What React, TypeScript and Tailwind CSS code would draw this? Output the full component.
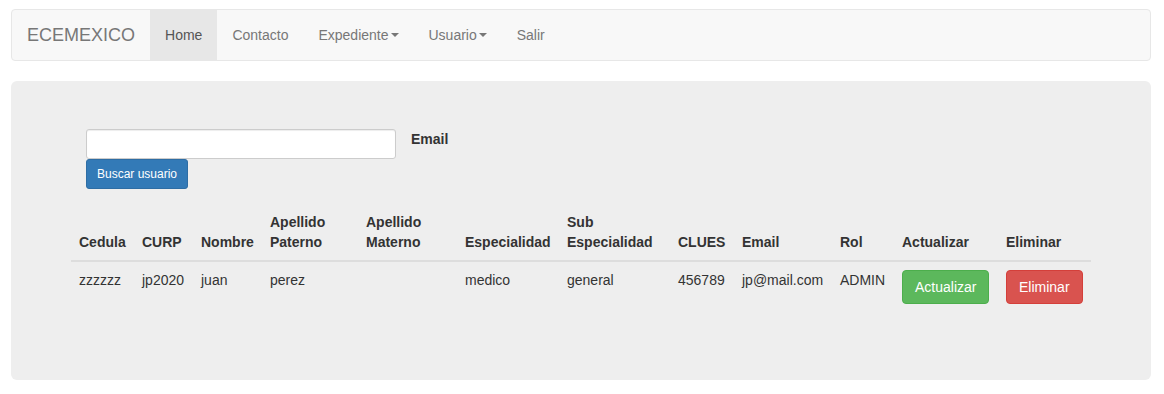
import React from "react";

// ─── Data ──────────────────────────────────────────────────────

const NAV = [
  { label: "Home", active: true },
  { label: "Contacto" },
  { label: "Expediente", caret: true },
  { label: "Usuario", caret: true },
  { label: "Salir" },
];

const COLUMNS = [
  { label: "Cedula", w: "w-[63px]" },
  { label: "CURP", w: "w-[59px]" },
  { label: "Nombre", w: "w-[69px]" },
  { label: "Apellido Paterno", w: "w-[96px]" },
  { label: "Apellido Materno", w: "w-[99px]" },
  { label: "Especialidad", w: "w-[102px]" },
  { label: "Sub Especialidad", w: "w-[111px]" },
  { label: "CLUES", w: "w-[64px]" },
  { label: "Email", w: "w-[98px]" },
  { label: "Rol", w: "w-[62px]" },
  { label: "Actualizar", w: "w-[104px]" },
  { label: "Eliminar", w: "w-[93px]" },
];

const ROWS = [
  {
    cedula: "zzzzzz",
    curp: "jp2020",
    nombre: "juan",
    paterno: "perez",
    materno: "",
    especialidad: "medico",
    sub: "general",
    clues: "456789",
    email: "jp@mail.com",
    rol: "ADMIN",
  },
];

// ─── Components ────────────────────────────────────────────────

export default function App() {
  return (
    <div className="min-h-screen bg-white pt-[9px] pl-[11px] pr-[13px] font-['Liberation_Sans',Arial,sans-serif] text-[14px] leading-[20px] text-[#333]">
      {/* ── Navbar ── */}
      <nav className="mb-[20px] flex h-[52px] rounded-[4px] border border-[#e7e7e7] bg-[#f8f8f8]">
        <a className="px-[15px] py-[15px] text-[18px] leading-[20px] text-[#777]">ECEMEXICO</a>
        <ul className="flex">
          {NAV.map((item) => (
            <li key={item.label}>
              <a
                className={`flex items-center px-[15px] py-[15px] leading-[20px] ${
                  item.active ? "bg-[#e7e7e7] text-[#555]" : "text-[#777]"
                }`}
              >
                {item.label}
                {item.caret && (
                  <span className="ml-[2px] inline-block h-0 w-0 border-x-[4px] border-t-[4px] border-x-transparent border-t-[#777]" />
                )}
              </a>
            </li>
          ))}
        </ul>
      </nav>

      {/* ── Jumbotron ── */}
      <div className="rounded-[6px] bg-[#eee] px-[60px] pt-[48px] pb-[48px]">
        <form className="flex flex-col items-start pl-[15px]">
          <div className="flex items-start gap-[15px]">
            <input
              type="text"
              className="h-[30px] w-[310px] rounded-[3px] border border-[#ccc] bg-white px-[10px] text-[12px] shadow-[inset_0_1px_1px_rgba(0,0,0,0.075)] outline-none"
            />
            <label className="font-bold">Email</label>
          </div>
          <button
            type="button"
            className="h-[30px] rounded-[3px] border border-[#2e6da4] bg-[#337ab7] px-[10px] text-[12px] leading-[18px] text-white"
          >
            Buscar usuario
          </button>
        </form>

        <table className="mt-[15px] mb-[20px] w-full table-fixed border-collapse">
          <colgroup>
            {COLUMNS.map((c) => (
              <col key={c.label} className={c.w} />
            ))}
          </colgroup>
          <thead>
            <tr>
              {COLUMNS.map((c) => (
                <th key={c.label} className="border-b-2 border-[#ddd] p-[8px] text-left align-bottom font-bold">
                  {c.label}
                </th>
              ))}
            </tr>
          </thead>
          <tbody>
            {ROWS.map((r) => (
              <tr key={r.cedula}>
                <td className="p-[8px] align-top">{r.cedula}</td>
                <td className="p-[8px] align-top">{r.curp}</td>
                <td className="p-[8px] align-top">{r.nombre}</td>
                <td className="p-[8px] align-top">{r.paterno}</td>
                <td className="p-[8px] align-top">{r.materno}</td>
                <td className="p-[8px] align-top">{r.especialidad}</td>
                <td className="p-[8px] align-top">{r.sub}</td>
                <td className="p-[8px] align-top">{r.clues}</td>
                <td className="p-[8px] align-top whitespace-nowrap">{r.email}</td>
                <td className="p-[8px] align-top">{r.rol}</td>
                <td className="p-[8px] align-top">
                  <button className="h-[34px] rounded-[4px] border border-[#4cae4c] bg-[#5cb85c] px-[12px] text-white">
                    Actualizar
                  </button>
                </td>
                <td className="p-[8px] align-top">
                  <button className="h-[34px] rounded-[4px] border border-[#d43f3a] bg-[#d9534f] px-[12px] text-white">
                    Eliminar
                  </button>
                </td>
              </tr>
            ))}
          </tbody>
        </table>
      </div>
    </div>
  );
}
